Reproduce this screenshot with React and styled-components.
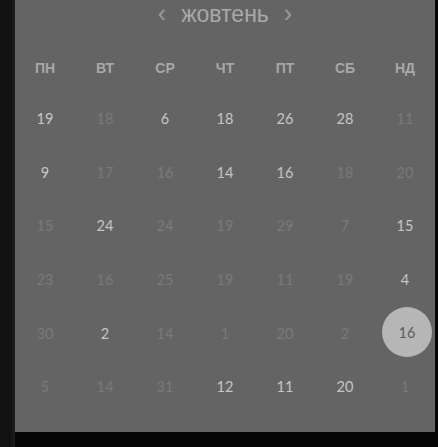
import { createGlobalStyle, styled } from 'styled-components';

const GlobalStyle = createGlobalStyle`
  html, body {
    margin: 0;
    padding: 0;
    background: #070707;
    overflow: hidden;
  }
  #root {
    height: 447px;
  }
`;

const Screen = styled.div`
  display: flex;
  height: 447px;
  width: 438px;
`;

const Sidebar = styled.div`
  width: 15px;
  flex: none;
  background: linear-gradient(to right, #111 0, #121212 11px, #1c1c1c 14px, #202020 15px);
`;

const Main = styled.div`
  flex: 1;
  background: #060606;
`;

const Panel = styled.div`
  width: 420px;
  height: 432px;
  background: #646464;
  font-family: Lato, "Noto Sans", sans-serif;
`;

const MonthBar = styled.div`
  box-sizing: border-box;
  height: 30px;
  padding-bottom: 2px;
  display: flex;
  align-items: center;
  justify-content: center;
  gap: 15px;
  font-family: "Liberation Sans", sans-serif;
  line-height: 26px;
`;

const Arrow = styled.span`
  font-size: 25px;
  color: #9a9a9a;
  padding-bottom: 3px;
`;

const Month = styled.span`
  font-size: 23px;
  color: #a9a9a9;
`;

const Weekdays = styled.div`
  display: grid;
  grid-template-columns: repeat(7, 60px);
  height: 48px;
  margin-top: 14px;
  align-items: center;
  justify-items: center;
`;

const Weekday = styled.span`
  font-family: "Liberation Sans", sans-serif;
  font-size: 14px;
  font-weight: 700;
  color: #a8a8a8;
`;

const Days = styled.div`
  display: grid;
  grid-template-columns: repeat(7, 60px);
  grid-auto-rows: 53.6px;
  align-items: center;
  justify-items: center;
`;

const Day = styled.span`
  display: flex;
  align-items: center;
  justify-content: center;
  width: 50px;
  height: 50px;
  border-radius: 50%;
  font-size: 14.5px;
  color: ${({ $muted }) => ($muted ? '#7a7a7a' : '#c6c6c6')};
  background: ${({ $selected }) => ($selected ? '#b6b6b6' : 'transparent')};
  ${({ $selected }) => $selected && 'color: #5c5c5c; transform: translate(2px, -1px);'}
`;

const weekdays = ['пн', 'вт', 'ср', 'чт', 'пт', 'сб', 'нд'];

// b = bright, d = dim, s = selected
const rows = [
  [[19, 'b'], [18, 'd'], [6, 'b'], [18, 'b'], [26, 'b'], [28, 'b'], [11, 'd']],
  [[9, 'b'], [17, 'd'], [16, 'd'], [14, 'b'], [16, 'b'], [18, 'd'], [20, 'd']],
  [[15, 'd'], [24, 'b'], [24, 'd'], [19, 'd'], [29, 'd'], [7, 'd'], [15, 'b']],
  [[23, 'd'], [16, 'd'], [25, 'd'], [19, 'd'], [11, 'd'], [19, 'd'], [4, 'b']],
  [[30, 'd'], [2, 'b'], [14, 'd'], [1, 'd'], [20, 'd'], [2, 'd'], [16, 's']],
  [[5, 'd'], [14, 'd'], [31, 'd'], [12, 'b'], [11, 'b'], [20, 'b'], [1, 'd']],
];

export default function App() {
  return (
    <>
      <GlobalStyle />
      <Screen>
        <Sidebar />
        <Main>
          <Panel>
            <MonthBar>
              <Arrow>‹</Arrow>
              <Month>жовтень</Month>
              <Arrow>›</Arrow>
            </MonthBar>
            <Weekdays>
              {weekdays.map(w => (
                <Weekday key={w}>{w.toUpperCase()}</Weekday>
              ))}
            </Weekdays>
            <Days>
              {rows.flat().map(([n, kind], i) => (
                <Day key={i} $muted={kind === 'd'} $selected={kind === 's'}>
                  {n}
                </Day>
              ))}
            </Days>
          </Panel>
        </Main>
      </Screen>
    </>
  );
}
